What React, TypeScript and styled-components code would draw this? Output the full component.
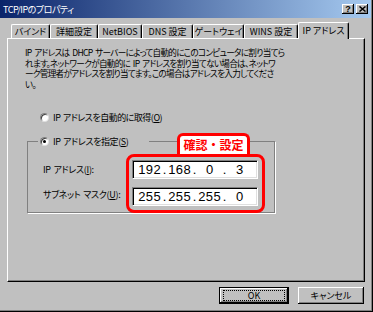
import React from "react";
import styled, { createGlobalStyle } from "styled-components";

const GlobalStyle = createGlobalStyle`
  html, body {
    margin: 0;
    padding: 0;
    background: #c0c0c0;
  }
`;

const uiFont = `"Noto Sans CJK JP", "Noto Sans", sans-serif`;

const TABS = ["バインド", "詳細設定", "NetBIOS", "DNS 設定", "ゲートウェイ", "WINS 設定", "IP アドレス"];
const TAB_WIDTHS = [39, 48, 44, 51, 51, 54, 51];

const App: React.FC = () => {
  return (
    <>
      <GlobalStyle />
      <Window>
        <TitleBar>
          <Title>TCP/IPのプロパティ</Title>
          <TitleButtons>
            <TitleButton>?</TitleButton>
            <TitleButton>
              <svg width="7" height="6" viewBox="0 0 7 6">
                <path d="M0.5 0.5 L6.5 5.5 M6.5 0.5 L0.5 5.5" stroke="#000" strokeWidth="1.5" />
              </svg>
            </TitleButton>
          </TitleButtons>
        </TitleBar>

        <TabRow>
          {TABS.map((t, i) => (
            <Tab key={t} $width={TAB_WIDTHS[i]} $active={i === TABS.length - 1}>
              {t}
            </Tab>
          ))}
        </TabRow>

        <Panel>
          <Description>
            IP アドレスは DHCP サーバーによって自動的にこのコンピュータに割り当てら
            <br />
            れます。ネットワークが自動的に IP アドレスを割り当てない場合は、ネットワ
            <br />
            ーク管理者がアドレスを割り当てます。この場合はアドレスを入力してくださ
            <br />
            い。
          </Description>

          <RadioRow>
            <RadioDot />
            <span>
              IP アドレスを自動的に取得(<u>O</u>)
            </span>
          </RadioRow>

          <GroupBox>
            <Legend>
              <RadioDot $on />
              <span>
                IP アドレスを指定(<u>S</u>)
              </span>
            </Legend>
            <GroupBody>
              <Labels>
                <FieldLabel>
                  IP アドレス(<u>I</u>):
                </FieldLabel>
                <FieldLabel>
                  サブネット マスク(<u>U</u>):
                </FieldLabel>
              </Labels>
              <Highlight>
                <HighlightTag>確認・設定</HighlightTag>
                <IpInput>
                  <Octet>192</Octet>
                  <Dot>.</Dot>
                  <Octet>168</Octet>
                  <Dot>.</Dot>
                  <Octet>0</Octet>
                  <Dot>.</Dot>
                  <Octet>3</Octet>
                </IpInput>
                <IpInput>
                  <Octet>255</Octet>
                  <Dot>.</Dot>
                  <Octet>255</Octet>
                  <Dot>.</Dot>
                  <Octet>255</Octet>
                  <Dot>.</Dot>
                  <Octet>0</Octet>
                </IpInput>
              </Highlight>
            </GroupBody>
          </GroupBox>
        </Panel>

        <ButtonRow>
          <Button $width={70} $default>
            OK
          </Button>
          <Button $width={66}>キャンセル</Button>
        </ButtonRow>
      </Window>
    </>
  );
};

export default App;

const Window = styled.div`
  width: 373px;
  height: 312px;
  box-sizing: border-box;
  background: #c0c0c0;
  box-shadow: inset -1px -1px 0 #000, inset -2px -2px 0 #808080;
  font-family: ${uiFont};
  font-size: 9px;
  font-feature-settings: "palt";
  color: #000;
  display: flex;
  flex-direction: column;
  overflow: hidden;
`;

const TitleBar = styled.div`
  width: 371px;
  height: 18px;
  box-sizing: border-box;
  padding: 0 3px 0 3px;
  display: flex;
  align-items: center;
  background: linear-gradient(to right, #0a246a, #a6caf0);
  color: #fff;
`;

const Title = styled.span`
  font-size: 9px;
  line-height: 1;
  letter-spacing: -0.5px;
`;

const TitleButtons = styled.div`
  margin-left: auto;
  display: flex;
  gap: 2px;
`;

const TitleButton = styled.div`
  width: 12px;
  height: 10px;
  box-sizing: border-box;
  background: #c0c0c0;
  box-shadow: inset -1px -1px 0 #000, inset 1px 1px 0 #fff, inset -2px -2px 0 #808080;
  display: flex;
  align-items: center;
  justify-content: center;
  color: #000;
  font-family: "Liberation Sans", sans-serif;
  font-weight: bold;
  font-size: 9px;
  line-height: 1;
`;

const TabRow = styled.div`
  margin-top: 4px;
  height: 16px;
  padding-left: 11px;
  display: flex;
  align-items: flex-end;
  position: relative;
  z-index: 1;
`;

const Tab = styled.div<{ $width: number; $active?: boolean }>`
  width: ${(p) => p.$width}px;
  height: ${(p) => (p.$active ? 17 : 14)}px;
  margin-bottom: ${(p) => (p.$active ? -1 : 0)}px;
  box-sizing: border-box;
  background: #c0c0c0;
  border-top: 1px solid #fff;
  border-left: 1px solid #fff;
  border-right: 1px solid #000;
  border-radius: 2px 2px 0 0;
  box-shadow: inset -1px 0 0 #808080;
  display: flex;
  align-items: center;
  justify-content: center;
  padding-bottom: ${(p) => (p.$active ? 2 : 0)}px;
  white-space: nowrap;
  line-height: 1;
`;

const Panel = styled.div`
  margin-left: 7px;
  width: 358px;
  height: 244px;
  box-sizing: border-box;
  border-top: 1px solid #fff;
  border-left: 1px solid #fff;
  border-right: 1px solid #000;
  border-bottom: 1px solid #000;
  box-shadow: inset -1px -1px 0 #808080;
  display: flex;
  flex-direction: column;
  align-items: flex-start;
`;

const Description = styled.p`
  margin: 8px 0 0 17px;
  font-size: 8.6px;
  line-height: 10.5px;
  white-space: nowrap;
  letter-spacing: -0.7px;
  word-spacing: 1.5px;
`;

const RadioRow = styled.div`
  margin: 22.5px 0 0 32px;
  height: 12px;
  display: flex;
  align-items: center;
  gap: 4px;
  white-space: nowrap;
  letter-spacing: -0.5px;
  word-spacing: 1px;
`;

const RadioDot = styled.span<{ $on?: boolean }>`
  width: 9px;
  height: 9px;
  flex: none;
  box-sizing: border-box;
  border-radius: 50%;
  background: #fff;
  border: 1px solid;
  border-color: #808080 #dfdfdf #dfdfdf #808080;
  box-shadow: inset 1px 1px 0 #404040;
  display: flex;
  align-items: center;
  justify-content: center;

  &::after {
    content: "";
    width: 3px;
    height: 3px;
    border-radius: 50%;
    background: ${(p) => (p.$on ? "#000" : "transparent")};
  }
`;

const GroupBox = styled.fieldset`
  margin: 12px 0 0 19px;
  width: 248px;
  height: 77px;
  box-sizing: border-box;
  padding: 6px 8px 0 15px;
  border: 1px solid #808080;
  box-shadow: 1px 1px 0 #fff;
  min-width: 0;
`;

const Legend = styled.legend`
  margin-left: -5px;
  padding: 0 21px 0 2px;
  height: 12px;
  display: flex;
  align-items: center;
  gap: 4px;
  white-space: nowrap;
  letter-spacing: -0.4px;
  word-spacing: 1px;
`;

const GroupBody = styled.div`
  display: flex;
  align-items: flex-start;
`;

const Labels = styled.div`
  width: 83px;
  padding-top: 6px;
  display: flex;
  flex-direction: column;
  gap: 6px;
`;

const FieldLabel = styled.div`
  height: 19px;
  display: flex;
  align-items: center;
  white-space: nowrap;
  letter-spacing: -0.3px;
  word-spacing: 1px;
`;

const Highlight = styled.div`
  position: relative;
  border: 3px solid #ff0000;
  border-radius: 8px;
  padding: 3px 4px 4px 3px;
  display: flex;
  flex-direction: column;
  gap: 8px;
`;

const HighlightTag = styled.div`
  position: absolute;
  left: 48px;
  top: -24px;
  width: 73px;
  height: 21px;
  box-sizing: border-box;
  background: #fff;
  border: 3px solid #ff0000;
  border-bottom: none;
  border-radius: 6px 6px 0 0;
  color: #ff0000;
  font-weight: bold;
  font-size: 12px;
  font-feature-settings: normal;
  line-height: 1;
  display: flex;
  align-items: center;
  justify-content: center;
  padding-top: 1px;
  white-space: nowrap;
`;

const IpInput = styled.div`
  width: 126px;
  height: 19px;
  box-sizing: border-box;
  background: #fff;
  border: 1px solid;
  border-color: #808080 #fff #fff #808080;
  box-shadow: inset 1px 1px 0 #000, inset -1px -1px 0 #dfdfdf;
  padding-left: 3px;
  display: grid;
  grid-template-columns: 27px 3px 27px 3px 27px 3px 27px;
  align-items: center;
  font-family: "Liberation Sans", sans-serif;
  font-size: 13px;
  line-height: 1;
  color: #000;
`;

const Octet = styled.span`
  text-align: center;
  letter-spacing: 0.5px;
  padding-left: 0.5px;
`;

const Dot = styled.span`
  display: flex;
  justify-content: center;
`;

const ButtonRow = styled.div`
  margin-top: 5px;
  padding-right: 9px;
  display: flex;
  justify-content: flex-end;
  gap: 9px;
`;

const Button = styled.div<{ $width: number; $default?: boolean }>`
  position: relative;
  width: ${(p) => p.$width}px;
  height: 17px;
  box-sizing: border-box;
  background: #c0c0c0;
  border: ${(p) => (p.$default ? "1px solid #000" : "none")};
  box-shadow: inset -1px -1px 0 #000, inset 1px 1px 0 #fff, inset -2px -2px 0 #808080;
  display: flex;
  align-items: center;
  justify-content: center;
  line-height: 1;
  white-space: nowrap;

  &::after {
    content: "";
    display: ${(p) => (p.$default ? "block" : "none")};
    position: absolute;
    inset: 2px 3px;
    border: 1px dotted #000;
  }
`;
